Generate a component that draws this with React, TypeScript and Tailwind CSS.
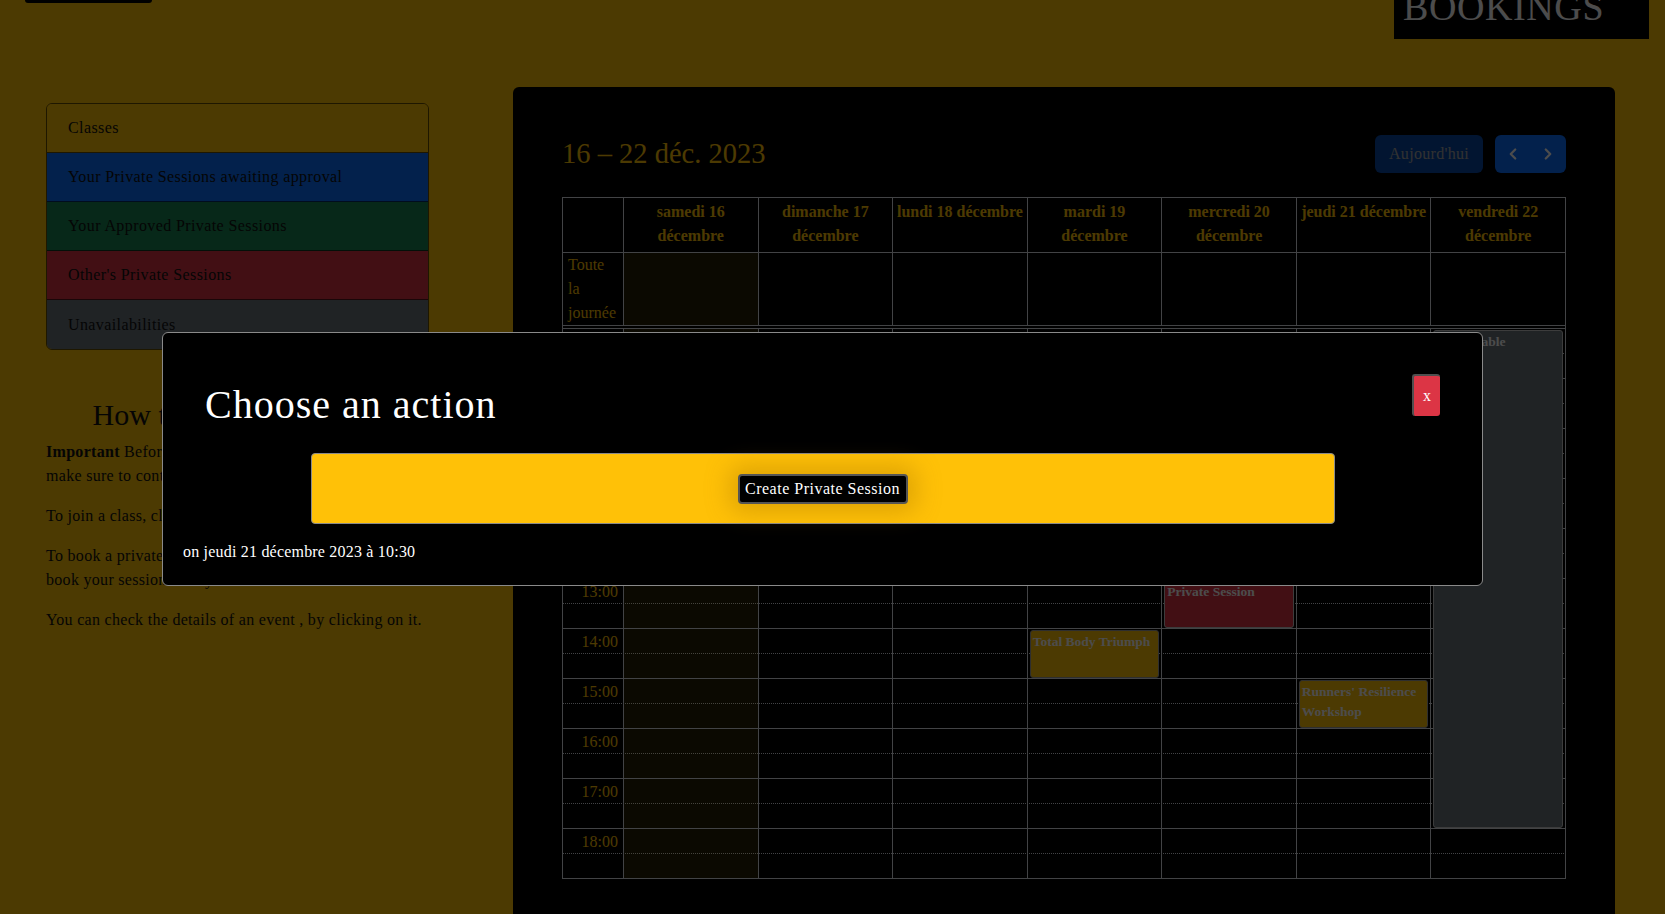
import React from 'react';
import { ChevronLeft, ChevronRight } from 'lucide-react';

type Day = { lines: string[]; today?: boolean };
type CalEvent = { day: number; start: number; end: number; title: string; kind: 'class' | 'other' | 'unavailable' };

const days: Day[] = [
  { lines: ['samedi 16', 'décembre'], today: true },
  { lines: ['dimanche 17', 'décembre'] },
  { lines: ['lundi 18 décembre'] },
  { lines: ['mardi 19', 'décembre'] },
  { lines: ['mercredi 20', 'décembre'] },
  { lines: ['jeudi 21 décembre'] },
  { lines: ['vendredi 22', 'décembre'] },
];

const hours = [8, 9, 10, 11, 12, 13, 14, 15, 16, 17, 18];
const START = 8;
const HOUR_H = 50;

const events: CalEvent[] = [
  { day: 3, start: 14, end: 15, title: 'Total Body Triumph', kind: 'class' },
  { day: 4, start: 13, end: 14, title: 'Private Session', kind: 'other' },
  { day: 5, start: 15, end: 16, title: "Runners' Resilience Workshop", kind: 'class' },
  { day: 6, start: 8, end: 18, title: 'Unavailable', kind: 'unavailable' },
];

const kindClass = {
  class: 'bg-[#FFC107] border-[#9a9a9a]',
  other: 'bg-[#dc3545] border-[#c9c9c9]',
  unavailable: 'bg-[#6c757d] border-[#c9c9c9]',
};

const legend = [
  { label: 'Classes', cls: 'bg-[#FFC107]' },
  { label: 'Your Private Sessions awaiting approval', cls: 'bg-[#0d6efd]' },
  { label: 'Your Approved Private Sessions', cls: 'bg-[#198754]' },
  { label: "Other's Private Sessions", cls: 'bg-[#dc3545]' },
  { label: 'Unavailabilities', cls: 'bg-[#6c757d]' },
];

const cols = 'grid grid-cols-[61px_repeat(7,minmax(0,1fr))]';

const Calendar: React.FC = () => (
  <div className="w-[1004px] border-l border-t border-[#dee2e6]">
    {/* day headers */}
    <div className={`${cols} h-[55px]`}>
      <div className="border-r border-b border-[#dee2e6]" />
      {days.map((d, i) => (
        <div key={i} className="border-r border-b border-[#dee2e6] pt-[2px] text-center text-[16px] leading-[24px] font-bold text-[#FFC107] whitespace-nowrap">
          {d.lines.map((l, j) => (
            <div key={j}>{l}</div>
          ))}
        </div>
      ))}
    </div>

    {/* all day row */}
    <div className={`${cols} h-[72px]`}>
      <div className="border-r border-b border-[#dee2e6] pl-[5px] text-[16px] leading-[24px] text-[#FFC107]">
        <div>Toute</div>
        <div>la</div>
        <div>journée</div>
      </div>
      {days.map((d, i) => (
        <div key={i} className={`border-r border-b border-[#dee2e6] ${d.today ? 'bg-[rgba(255,220,40,0.15)]' : ''}`} />
      ))}
    </div>
    <div className="h-[4px] border-r border-b border-[#dee2e6]" />

    {/* time grid */}
    <div className="relative">
      {hours.map((h) => (
        <div key={h}>
          <div className={`${cols} h-[25px] border-b border-dotted border-[#dee2e6]`}>
            <div className="border-r border-[#dee2e6] pr-[5px] text-right text-[16px] leading-[25px] text-[#FFC107]">
              {String(h).padStart(2, '0')}:00
            </div>
            {days.map((d, i) => (
              <div key={i} className={`border-r border-[#dee2e6] ${d.today ? 'bg-[rgba(255,220,40,0.15)]' : ''}`} />
            ))}
          </div>
          <div className={`${cols} h-[25px] border-b border-[#dee2e6]`}>
            <div className="border-r border-[#dee2e6]" />
            {days.map((d, i) => (
              <div key={i} className={`border-r border-[#dee2e6] ${d.today ? 'bg-[rgba(255,220,40,0.15)]' : ''}`} />
            ))}
          </div>
        </div>
      ))}

      {/* events layer */}
      <div className={`absolute inset-0 ${cols}`}>
        <div />
        {days.map((_, di) => (
          <div key={di} className="relative">
            {events
              .filter((e) => e.day === di)
              .map((e, k) => (
                <div
                  key={k}
                  className={`absolute left-[2px] right-[3px] rounded-[3px] border px-[2px] pt-[1px] text-[13.5px] leading-[20px] font-bold text-white overflow-hidden ${kindClass[e.kind]}`}
                  style={{ top: (e.start - START) * HOUR_H + 1, height: (e.end - e.start) * HOUR_H - 2 }}
                >
                  {e.title}
                </div>
              ))}
          </div>
        ))}
      </div>
    </div>
  </div>
);

export default function App() {
  return (
    <div className="relative h-[914px] w-full overflow-hidden bg-[#FFC107] font-['Liberation_Serif','DejaVu_Serif',serif] text-[#212529]">
      {/* top bar, scrolled partly out */}
      <div className="flex h-[87px] items-start justify-between">
        <div className="ml-[25px] h-[3px] w-[127px] rounded-b-lg bg-black" />
        <div className="mr-[16px] h-[39px] w-[255px] overflow-hidden bg-black pl-[9px]">
          <div className="-mt-[12px] text-[38px] leading-[38px] tracking-[0.6px] text-white">BOOKINGS</div>
        </div>
      </div>

      <div className="flex pl-[46px]">
        {/* sidebar */}
        <aside className="mt-[16px] w-[383px] shrink-0">
          <div className="overflow-hidden rounded-md border border-black/60">
            {legend.map((l, i) => (
              <div
                key={i}
                className={`flex h-[49px] items-center px-[21px] text-[16px] tracking-[0.4px] text-[#111] ${l.cls} ${i < legend.length - 1 ? 'border-b border-black/60' : ''}`}
              >
                {l.label}
              </div>
            ))}
          </div>

          <h2 className="mt-[48px] mb-[8px] text-center text-[30px] leading-[34px] text-[#111]">How to use the calendar</h2>
          <div className="text-[16px] leading-[24px] tracking-[0.3px] text-[#111]">
            <p className="mb-4">
              <b>Important</b> Before booking a private session,
              <br />
              make sure to contact your coach first.
            </p>
            <p className="mb-4">To join a class, click on it and join it.</p>
            <p className="mb-4">
              To book a private session, click on a free slot and
              <br />
              book your session with your coach.
            </p>
            <p className="mb-4">You can check the details of an event , by clicking on it.</p>
          </div>
        </aside>

        {/* calendar card */}
        <main className="ml-[84px] h-[840px] w-[1102px] shrink-0 rounded-md bg-black px-[49px] pt-[48px]">
          <div className="mb-[24px] flex h-[38px] items-center justify-between">
            <h1 className="text-[28.5px] leading-[38px] text-[#FFC107]">16 – 22 déc. 2023</h1>
            <div className="flex items-center gap-[12px]">
              <button className="h-[38px] w-[108px] rounded-md bg-[#0d6efd] text-[16px] tracking-[0.3px] text-white opacity-65">Aujourd'hui</button>
              <div className="flex h-[38px] w-[71px] overflow-hidden rounded-md bg-[#0d6efd] text-white">
                <button className="flex flex-1 items-center justify-center">
                  <ChevronLeft size={18} strokeWidth={3} />
                </button>
                <button className="flex flex-1 items-center justify-center">
                  <ChevronRight size={18} strokeWidth={3} />
                </button>
              </div>
            </div>
          </div>
          <Calendar />
        </main>
      </div>

      {/* modal backdrop */}
      <div className="fixed inset-0 bg-black/70" />

      {/* modal */}
      <div className="fixed left-[162px] top-[332px] h-[254px] w-[1321px] rounded-md border border-[#8a8a8a] bg-black text-white">
        <div className="flex items-start justify-between pl-[42px] pr-[42px] pt-[41px]">
          <h3 className="mt-[9px] text-[40px] leading-[44px] tracking-[1px]">Choose an action</h3>
          <button className="flex h-[42px] w-[28px] items-center justify-center rounded-[3px] border-l-2 border-t-2 border-[#4f4f4f] bg-[#dc3545] text-[16px] text-white">
            x
          </button>
        </div>
        <div className="mx-auto mt-[26px] flex h-[71px] w-[1024px] items-center justify-center rounded-[4px] border border-[#8a8a8a] bg-[#FFC107]">
          <button className="h-[30px] w-[170px] rounded-[4px] border-2 border-[#555] bg-black text-[16px] tracking-[0.5px] text-white shadow-[0_0_24px_8px_rgba(160,110,0,0.35)]">
            Create Private Session
          </button>
        </div>
        <p className="ml-[20px] mt-[18px] text-[16px] leading-[20px] tracking-[0.2px] text-white">on jeudi 21 décembre 2023 à 10:30</p>
      </div>
    </div>
  );
}
